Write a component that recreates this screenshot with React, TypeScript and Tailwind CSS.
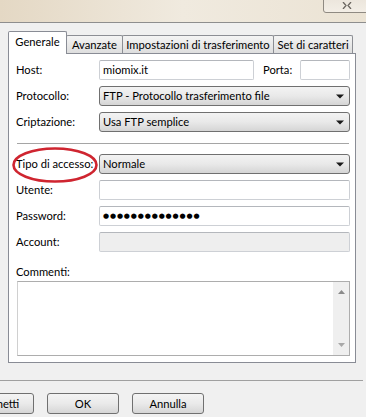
import React from "react";

const Field = ({ label, children }: { label: string; children: React.ReactNode }) => (
  <div className="flex h-[20px] items-center">
    <div className="w-[83px] shrink-0 whitespace-nowrap">{label}</div>
    {children}
  </div>
);

const TextBox = ({ className = "", children }: { className?: string; children?: React.ReactNode }) => (
  <div
    className={`flex h-[20px] items-center rounded-[2px] border border-[#cdd0d5] border-t-[#b4b7bc] bg-white px-[3px] ${className}`}
  >
    {children}
  </div>
);

const Select = ({ value }: { value: string }) => (
  <div className="flex h-[20px] flex-1 items-center justify-between rounded-[3px] border border-[#707070] bg-gradient-to-b from-[#f3f3f3] via-[#e9e9e9] to-[#d5d5d5] pl-[3px] pr-[5px]">
    <span className="whitespace-nowrap">{value}</span>
    <svg width="8" height="5" viewBox="0 0 8 5">
      <path d="M0 0.5H8L4 4.5Z" fill="#1a1a1a" />
    </svg>
  </div>
);

const Tab = ({ label, w, active }: { label: string; w: string; active?: boolean }) =>
  active ? (
    <div
      className={`${w} relative z-10 mb-[-1px] flex h-[23px] items-center justify-center whitespace-nowrap rounded-t-[2px] border border-b-0 border-[#898c95] bg-white pb-[2px]`}
    >
      {label}
    </div>
  ) : (
    <div
      className={`${w} -ml-px flex h-[18px] items-center justify-center whitespace-nowrap rounded-t-[2px] border border-b-0 border-[#8c8e94] bg-gradient-to-b from-[#f4f4f4] to-[#dedede]`}
    >
      {label}
    </div>
  );

const Button = ({ label }: { label: string }) => (
  <div className="flex h-[21px] w-[72px] shrink-0 items-center justify-center rounded-[3px] border border-[#707070] bg-gradient-to-b from-[#f4f4f4] via-[#eaeaea] to-[#d6d6d6]">
    {label}
  </div>
);

export default function App() {
  return (
    <div className="flex h-[417px] w-[366px] flex-col overflow-hidden bg-[#f0f0f0] font-['Lato',sans-serif] text-[11.2px] leading-[16px] text-black">
      {/* window caption */}
      <div className="relative h-[23px] shrink-0 border-b border-[#8e8e8e] bg-gradient-to-r from-[#e4d8c4] via-[#f0eadf] to-[#ebe3d4]">
        <div className="absolute right-[-4px] top-[-6px] flex h-[19px] w-[47px] items-end justify-center rounded-[3px] border border-[#8f8a82] bg-gradient-to-b from-[#e9e3d9] to-[#f3eee6] pb-[3px]">
          <svg width="10" height="7" viewBox="0 0 10 7">
            <path d="M1 0L4 3.5L1 7M9 0L6 3.5L9 7" stroke="#6b6660" strokeWidth="1.3" fill="none" />
          </svg>
        </div>
      </div>

      <div className="pl-[8px] pt-[9px]">
        {/* tabs */}
        <div className="flex h-[21px] items-end">
          <Tab label="Generale" w="w-[59px]" active />
          <Tab label="Avanzate" w="w-[57px]" />
          <Tab label="Impostazioni di trasferimento" w="w-[152px]" />
          <Tab label="Set di caratteri" w="w-[80px]" />
        </div>

        {/* panel */}
        <div className="flex h-[310px] w-[348px] flex-col border border-[#898c95] bg-white pl-[7px] pr-[5px] pt-[6px]">
          <div className="flex flex-col gap-[6px]">
            <Field label="Host:">
              <TextBox className="w-[155px]">miomix.it</TextBox>
              <div className="w-[46px] shrink-0 pl-[9px]">Porta:</div>
              <TextBox className="flex-1" />
            </Field>
            <Field label="Protocollo:">
              <Select value="FTP - Protocollo trasferimento file" />
            </Field>
            <Field label="Criptazione:">
              <Select value="Usa FTP semplice" />
            </Field>
          </div>

          <div className="mx-[1px] mt-[11px] h-px shrink-0 bg-[#a5a5a5]" />

          <div className="mt-[10px] flex flex-col gap-[6px]">
            <div className="relative">
              <Field label="Tipo di accesso:">
                <Select value="Normale" />
              </Field>
              <svg
                className="pointer-events-none absolute left-[-5px] top-[-8px]"
                width="90"
                height="38"
                viewBox="0 0 90 38"
              >
                <ellipse cx="44" cy="19" rx="41.5" ry="16.5" fill="none" stroke="#cf2530" strokeWidth="2.6" />
              </svg>
            </div>
            <Field label="Utente:">
              <TextBox className="flex-1" />
            </Field>
            <Field label="Password:">
              <TextBox className="flex-1">
                <span className="font-['DejaVu_Sans',sans-serif] text-[7px] tracking-[0.85px]">
                  ●●●●●●●●●●●●●●
                </span>
              </TextBox>
            </Field>
            <Field label="Account:">
              <TextBox className="flex-1 !bg-[#eeeeee]" />
            </Field>
          </div>

          <div className="mt-[12px] h-[16px]">Commenti:</div>
          <div className="ml-[1px] mt-[1px] flex h-[75px] justify-end border border-[#adadad] border-l-[#d0d0d0] bg-white">
            <div className="flex w-[16px] flex-col items-center justify-between bg-[#efefef] py-[8px]">
              <svg width="7" height="4" viewBox="0 0 7 4">
                <path d="M0 4H7L3.5 0Z" fill="#8a8a8a" />
              </svg>
              <svg width="7" height="4" viewBox="0 0 7 4">
                <path d="M0 0H7L3.5 4Z" fill="#a8a8a8" />
              </svg>
            </div>
          </div>
        </div>
      </div>

      {/* bottom bar */}
      <div className="mt-[17px] h-px w-[363px] bg-[#a0a0a0]" />
      <div className="ml-[-38px] mt-[12px] flex gap-[13px]">
        <Button label="Connetti" />
        <Button label="OK" />
        <Button label="Annulla" />
      </div>
    </div>
  );
}
